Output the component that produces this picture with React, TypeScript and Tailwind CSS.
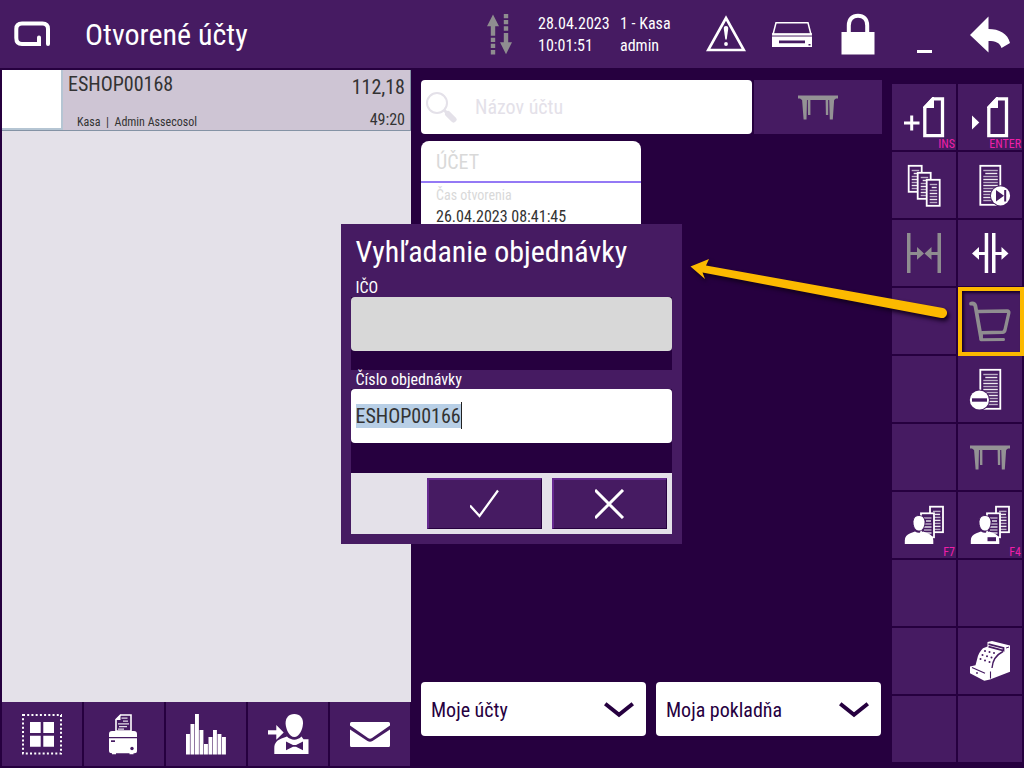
import { useEffect, useRef } from "react";
import type { ReactNode } from "react";

type IconProps = { children: ReactNode; className?: string };

function Icon({ children, className = "text-white" }: IconProps) {
  return (
    <svg
      viewBox="0 0 40 40"
      fill="currentColor"
      aria-hidden="true"
      className={`size-10 shrink-0 overflow-visible ${className}`}
    >
      {children}
    </svg>
  );
}

function Sheet({ x, y, w = 13, h = 26 }: { x: number; y: number; w?: number; h?: number }) {
  const lines = [];
  for (let i = 4; i < h - 2; i += 3) lines.push(i);
  return (
    <g>
      <rect x={x} y={y} width={w} height={h} fill="#461b62" stroke="currentColor" strokeWidth="1.8" />
      {lines.map((l, i) => (
        <rect
          key={l}
          x={x + (i === 1 ? 5 : 3)}
          y={y + l}
          width={i === 1 ? w - 8 : w - 5.5}
          height="1.4"
          opacity={i % 2 ? 0.9 : 0.65}
        />
      ))}
    </g>
  );
}

function BlankPage({ x }: { x: number }) {
  return (
    <g>
      <path
        d={`M${x + 10} 1.8H${x + 19.5}V38.7H${x + 1.8}V11Z`}
        fill="none"
        stroke="currentColor"
        strokeWidth="3.3"
      />
      <path d={`M${x} 10L${x + 9.5} 0H${x + 11}V11H${x}Z`} />
    </g>
  );
}

function AddPage() {
  return (
    <Icon>
      <path d="M6.2 18.5h3v6h6.3v3H9.2v6h-3v-6H0v-3h6.2z" />
      <BlankPage x={19} />
    </Icon>
  );
}

function OpenPage() {
  return (
    <Icon>
      <path d="M2 18.5L9.3 25.5L2 32.5Z" />
      <BlankPage x={17} />
    </Icon>
  );
}

function Copies() {
  return (
    <Icon>
      <Sheet x={4.7} y={0.8} />
      <Sheet x={13.7} y={7.8} />
      <Sheet x={22.7} y={14.8} />
    </Icon>
  );
}

function PageNext() {
  return (
    <Icon>
      <Sheet x={10.3} y={0.8} w={20} h={39} />
      <circle cx="30.5" cy="30.8" r="10.5" fill="#461b62" />
      <circle cx="30.5" cy="30.8" r="9.6" />
      <path d="M26 25v11.6l8-5.8zM34.2 25h2v11.6h-2z" fill="#461b62" />
    </Icon>
  );
}

function PageRemove() {
  return (
    <Icon>
      <Sheet x={10.3} y={0.8} w={20} h={39} />
      <circle cx="9.4" cy="31" r="10.5" fill="#461b62" />
      <circle cx="9.4" cy="31" r="9.6" />
      <path d="M2 29.3h15v3.4h-15z" fill="#461b62" />
    </Icon>
  );
}

function Merge() {
  return (
    <Icon className="text-[#8f8d90]">
      <path d="M3 0h3.5v40H3zM33.5 0H37v40h-3.5z" />
      <path d="M6 19h7v-5l7 6.5-7 6.3V22H6zM34 19h-6.5v-5l-7 6.5 7 6.3V22H34z" />
    </Icon>
  );
}

function Split() {
  return (
    <Icon>
      <path d="M14.7 0h3.5v40h-3.5zM22 0h3.5v40H22z" />
      <path d="M15 19H9v-5l-7 6.5 7 6.3V22h6zM25 19h6.5v-5l7 6.5-7 6.3V22H25z" />
    </Icon>
  );
}

function Cart() {
  return (
    <Icon className="text-[#8f8d90]">
      <g fill="none" stroke="currentColor" strokeLinecap="round" strokeLinejoin="round">
        <path d="M1 2.6Q4.6 2 5.4 5L11.2 38" strokeWidth="3.8" />
        <path d="M7.5 10.5L37.2 10Q39.2 10 38.8 12L35 29Q34.5 31 32.5 31.2L12 31.7" strokeWidth="3.4" />
        <path d="M11.5 34L11 38.7L33.5 38.4" strokeWidth="3" />
      </g>
    </Icon>
  );
}

function Table() {
  return (
    <Icon className="text-[#949295]">
      <path d="M0 8.5h40v3h-2l-2 1.5H4L2 11.5H0z" />
      <path d="M4 12h5l-.5 20.500H5.600zM31.200 12h5l-1.400 20.500h-3zM9.800 12h2.600v16H10zM27.600 12h2.600v16h-2.300z" />
    </Icon>
  );
}

function Person({ card = false }: { card?: boolean }) {
  return (
    <Icon>
      <Sheet x={26} y={1.7} w={13} h={25.5} />
      <Sheet x={17} y={8.3} w={13} h={24} />
      <path
        d="M15 10.5c4 0 6.3 3.2 6 7.6-.3 4.2-2.5 8-6 8s-5.7-3.8-6-8c-.3-4.4 2-7.6 6-7.6z"
        stroke="#461b62"
        strokeWidth="1"
      />
      <path d="M.8 39v-3.5c0-3.5 2-6 5.5-7.2l4.700-1.800c2.500 1.600 5.500 1.600 8 0l4.700 1.800c3.600 1.200 5.600 3.700 5.600 7.200V39z" />
      {card && <rect x="17.5" y="32.2" width="8.5" height="4" fill="#461b62" />}
    </Icon>
  );
}

function CashRegister() {
  const keys = [
    [15, 10], [19.5, 11], [24, 12],
    [12.5, 14], [17, 15.3], [21.5, 16.5],
    [10.5, 18], [15, 19.5], [19.5, 21],
  ];
  return (
    <Icon>
      <path d="M17.5 1L22 0L40 4.5V30.7L20 38.5L14.3 39.7L0 32.3V25.5L5.5 24.3L7.3 17.5Q8.6 11.5 13 7.3L17.5 5.5Z" />
      <g fill="none" stroke="#461b62">
        <path d="M18.5 3.2L33.5 7V9.6L18.5 5.6" strokeWidth="1.8" />
        <path d="M33 10.5C26 14 22.5 19 22 27" strokeWidth="1.4" />
        <path d="M2 26.5L15 32.3M20.5 30.5V37.5" strokeWidth="1.1" />
        <path d="M36 7L39 6" strokeWidth="1" />
      </g>
      <g fill="#461b62">
        {keys.map(([x, y]) => (
          <circle key={`${x}-${y}`} cx={x} cy={y} r="1" />
        ))}
        <circle cx="7" cy="32" r="0.9" />
      </g>
    </Icon>
  );
}

function SelectGrid() {
  return (
    <Icon>
      <rect x="1" y="1" width="38" height="38.5" fill="none" stroke="currentColor" strokeWidth="2" strokeDasharray="2 2.22" />
      <path d="M8 8h10.700v11H8zM21.300 8H32v11H21.300zM8 21.700h10.700v11H8zM21.300 21.700H32v11H21.300z" />
    </Icon>
  );
}

function Printer() {
  return (
    <Icon>
      <path d="M16.5 1H27V17H12V5.5Z" fill="none" stroke="currentColor" strokeWidth="1.6" />
      <path d="M11.5 6L16.5 .5V6Z" />
      <path d="M17.5 3.5h6v1.200h-6zM19 6.500h5v1.200h-5zM14 9.300h11v1.200H14zM15 12h8v1.200h-8zM14 14.500h6v1.200h-6z" opacity=".85" />
      <path d="M8 17h22q3 0 3 3v3H5v-3q0-3 3-3zM5 24.200h28v12.500q0 2.500-2.500 2.500H29.500v1h-4v-1H12v1H8v-1q-3 0-3-2.500z" />
      <path d="M7 26.300h4v1.700H7z" fill="#461b62" />
      <circle cx="28" cy="34.5" r="1.7" fill="#461b62" />
    </Icon>
  );
}

function Histogram() {
  const tops = [20, 10, 0, 16, 30, 23, 16, 20, 23];
  return (
    <Icon>
      {tops.map((top, i) => (
        <rect key={i} x={i * 4.5} y={top} width="3.9" height={40.5 - top} />
      ))}
    </Icon>
  );
}

function Waiter() {
  return (
    <Icon>
      <path d="M0 16.300h8.300v-5.300l7.400 7.400-7.400 7.400v-5.300H0z" />
      <path d="M26.300 0c5.700 0 9 4 8.700 9.800-.4 6-3.700 13.200-8.700 13.200s-8.300-7.200-8.700-13.200C17.300 4 20.600 0 26.300 0z" />
      <path d="M6.300 40V34c0-5 3-8 7.200-9.500l5.500-2c4 4.200 10.500 4.200 14.500 0l2 2.700h5V40z" />
      <path d="M18 27.500l7 3.500h3l7-3.500v8.700l-7-3.500h-3l-7 3.500z" fill="#461b62" />
    </Icon>
  );
}

function Mail() {
  return (
    <Icon>
      <path d="M1.500 8h37Q40 8 40 9.500V11.500L22 24Q20 25.500 18 24L0 11.500V9.500Q0 8 1.500 8Z" />
      <path d="M0 15.500L17.500 27Q20 28.500 22.500 27L40 15.500V31.500Q40 33 38.500 33H1.500Q0 33 0 31.500Z" />
    </Icon>
  );
}

function SyncArrows() {
  return (
    <svg viewBox="0 0 25 41" fill="#8f8d90" className="h-[41px] w-[25px]" aria-hidden="true">
      <path d="M6 .5l6 11.800H8.200v9.400H3.800v-9.400H0zM3.800 23.700h4.400v4.300H3.800zM3.800 29.800h4.400v4.300H3.800zM3.800 36h4.400v4.500H3.800z" />
      <path d="M16.800 0h4.400v4.300h-4.400zM16.800 6h4.400v4.300h-4.400zM16.800 12.200h4.400v4.500h-4.400zM16.800 19h4.400v9.300H25l-6 12-6-12h3.800z" />
    </svg>
  );
}

function Warning() {
  return (
    <Icon>
      <path d="M20 4L37.800 36H2.200Z" fill="none" stroke="currentColor" strokeWidth="2.600" />
      <path d="M20 12c1.700 0 2.400 1.200 2.200 3l-1.500 10.500h-1.400L17.800 15c-.2-1.800.5-3 2.200-3z" />
      <circle cx="20" cy="30" r="1.9" />
    </Icon>
  );
}

function Drawer() {
  return (
    <Icon>
      <path d="M4 8.700h32l3 11.800H1z" fill="none" stroke="currentColor" strokeWidth="1.500" />
      <path d="M0 19h40v2.500H0z" opacity=".8" />
      <path d="M0 22.500h40V33H0z" />
      <path d="M7 26.500h26v2.700H7zM36.500 30h2v1.600h-2z" fill="#461b62" />
    </Icon>
  );
}

function Lock() {
  return (
    <Icon>
      <path d="M10.800 19V11.500C10.800 5 14.500 1.800 20 1.800S29.200 5 29.200 11.500V19" fill="none" stroke="currentColor" strokeWidth="4" />
      <path d="M3.500 18h33v22.400h-33z" />
    </Icon>
  );
}

function Back() {
  return (
    <Icon>
      <path d="M0 21L18.500 2.500V15C29 15 38 19.500 40 29L31.500 34C29.500 28.500 25.500 27 18.500 27V38.500Z" />
    </Icon>
  );
}

const headerButtons = [
  { label: "Upozornenia", icon: <Warning /> },
  { label: "Zásuvka", icon: <Drawer /> },
  { label: "Zamknúť", icon: <Lock /> },
  { label: "Minimalizovať", icon: <Icon><path d="M13 36h15v3h-15z" /></Icon> },
  { label: "Späť", icon: <Back /> },
];

const footerButtons = [
  { label: "Výber", icon: <SelectGrid /> },
  { label: "Tlač", icon: <Printer /> },
  { label: "Štatistika", icon: <Histogram /> },
  { label: "Obsluha", icon: <Waiter /> },
  { label: "Správa", icon: <Mail /> },
];

type Tile = { label: string; icon: ReactNode; hint?: string; active?: boolean } | null;

const tiles: Tile[] = [
  { label: "Nový účet", icon: <AddPage />, hint: "INS" },
  { label: "Otvoriť účet", icon: <OpenPage />, hint: "ENTER" },
  { label: "Kópie", icon: <Copies /> },
  { label: "Ďalší účet", icon: <PageNext /> },
  { label: "Spojiť", icon: <Merge /> },
  { label: "Rozdeliť", icon: <Split /> },
  null,
  { label: "Objednávka", icon: <Cart />, active: true },
  null,
  { label: "Odstrániť účet", icon: <PageRemove /> },
  null,
  { label: "Stôl", icon: <Table /> },
  { label: "Účty zákazníka", icon: <Person />, hint: "F7" },
  { label: "Karta zákazníka", icon: <Person card />, hint: "F4" },
  null,
  null,
  null,
  { label: "Pokladňa", icon: <CashRegister /> },
  null,
  null,
];

function Header() {
  return (
    <header className="flex h-[68px] items-center bg-[#461b62] pr-px pl-[14px] text-white">
      <svg viewBox="0 0 36 26" className="h-[26px] w-9" fill="none" stroke="currentColor" strokeWidth="4" strokeLinecap="round" aria-hidden="true">
        <path d="M34 23V8Q34 2.500 28.500 2.500H8Q2.300 2.500 2.300 8V17Q2.300 23 8 23H25V16.500" />
      </svg>
      <h1 className="ml-[35px] pt-0.5 text-[30px] leading-10">Otvorené účty</h1>
      <div className="ml-auto flex items-center">
        <SyncArrows />
        <div className="ml-[26px] w-[82px] pt-0.5 text-base leading-[22px]">
          <p>28.04.2023</p>
          <p>10:01:51</p>
        </div>
        <div className="w-[73px] pt-0.5 text-base leading-[22px]">
          <p>1 - Kasa</p>
          <p>admin</p>
        </div>
        {headerButtons.map((b) => (
          <button key={b.label} aria-label={b.label} className="flex h-[68px] w-[66px] items-center justify-center">
            {b.icon}
          </button>
        ))}
      </div>
    </header>
  );
}

function Accounts() {
  return (
    <section className="flex w-[409px] shrink-0 flex-col">
      <div className="flex-1 bg-[#e4e1e9]">
        <button className="flex h-[61px] w-full border-b border-[#8493a5] bg-[#cec5d4] text-left text-[#333]">
          <span className="h-[60px] w-[61px] shrink-0 border-r-2 border-b-2 border-[#b5c5d3] bg-white" />
          <span className="flex h-[60px] flex-1 justify-between border-r border-[#8493a5] px-[5px]">
            <span className="flex flex-col justify-between">
              <span className="text-xl leading-7">ESHOP00168</span>
              <span className="pl-[9px] text-xs leading-4 whitespace-pre">Kasa  |  Admin Assecosol</span>
            </span>
            <span className="flex flex-col justify-between pt-[3px] text-right">
              <span className="text-xl leading-7">112,18</span>
              <span className="text-base leading-5">49:20</span>
            </span>
          </span>
        </button>
      </div>
      <div className="flex gap-0.5">
        {footerButtons.map((b) => (
          <button key={b.label} aria-label={b.label} className="flex h-16 w-20 items-center justify-center bg-[#461b62]">
            {b.icon}
          </button>
        ))}
      </div>
    </section>
  );
}

function Dropdown({ label, value }: { label: string; value: string }) {
  return (
    <div className="relative flex-1">
      <select aria-label={label} className="h-[54px] w-full appearance-none rounded bg-white pt-0.5 pr-12 pl-2.5 text-xl text-[#26003f]">
        <option>{value}</option>
      </select>
      <svg viewBox="0 0 30 16" className="pointer-events-none absolute top-5 right-3 h-4 w-[30px]" fill="none" stroke="#26003f" strokeWidth="4" aria-hidden="true">
        <path d="M1.200 1.700L15 12.800L28.800 1.700" />
      </svg>
    </div>
  );
}

function Workspace() {
  return (
    <main className="flex min-w-0 flex-1 flex-col px-2.5 pt-2.5 pb-[30px]">
      <div className="flex gap-0.5">
        <label className="flex h-[54px] min-w-0 flex-1 items-center rounded bg-white pl-[5px]">
          <svg viewBox="0 0 31 31" className="size-[31px] shrink-0" fill="none" stroke="#e4e1e9" aria-hidden="true">
            <circle cx="11" cy="11" r="10" strokeWidth="2" />
            <path d="M18 18L22 22" strokeWidth="3" />
            <path d="M22 22L27.500 27.500" strokeWidth="6" strokeLinecap="round" />
          </svg>
          <input type="text" aria-label="Názov účtu" placeholder="Názov účtu" className="ml-[18px] min-w-0 flex-1 text-xl outline-none placeholder:text-[#e4e1e9]" />
        </label>
        <button aria-label="Stoly" className="flex w-32 items-center justify-center bg-[#461b62]">
          <Table />
        </button>
      </div>
      <article className="mt-[7px] h-[150px] w-[220px] rounded-t-lg bg-white text-[#333]">
        <h2 className="border-b-2 border-[#9479f5] px-[15px] pt-0.5 text-xl leading-[38px] text-[#d9d9d9]">ÚČET</h2>
        <p className="px-[15px] pt-0.5 text-sm leading-5 text-[#d9d9d9]">Čas otvorenia</p>
        <p className="px-[15px] text-base leading-6">26.04.2023 08:41:45</p>
      </article>
      <div className="mt-auto flex gap-2.5 pr-px">
        <Dropdown label="Účty" value="Moje účty" />
        <Dropdown label="Pokladňa" value="Moja pokladňa" />
      </div>
    </main>
  );
}

// Highlight frame round the active tile with the arrow that leads to the dialog
function Callout() {
  return (
    <>
      <span className="pointer-events-none absolute -top-px -right-0.5 -bottom-0.5 left-0 z-20 border-4 border-[#fcb900] shadow-[inset_2px_2px_3px_#1a0029]" />
      <svg viewBox="0 0 270 76" className="pointer-events-none absolute -top-9 right-full z-20 h-[76px] w-[270px] drop-shadow-[2px_3px_2px_#12001e]" fill="#fcb900" aria-hidden="true">
        <path d="M2.500 14.500L21 7L18 13.500L255 56A5 5 0 0 1 253 66L14.500 20.500L17 27Z" />
      </svg>
    </>
  );
}

function Toolbar() {
  return (
    <nav className="mt-3.5 mr-0.5 grid auto-rows-[66px] grid-cols-[64px_64px] gap-0.5 self-start">
      {tiles.map((tile, i) => (
        <div key={i} className="relative">
          <button aria-label={tile?.label ?? "Prázdne"} className="flex size-full items-center justify-center bg-[#461b62]">
            {tile?.icon}
            {tile?.hint && (
              <span className="absolute right-px bottom-0 text-xs leading-3 text-[#f01fa8]">{tile.hint}</span>
            )}
          </button>
          {tile?.active && <Callout />}
        </div>
      ))}
    </nav>
  );
}

function OrderDialog() {
  const orderRef = useRef<HTMLInputElement>(null);

  useEffect(() => {
    orderRef.current?.focus();
    orderRef.current?.select();
  }, []);

  return (
    <div className="pointer-events-none fixed inset-0 z-10 flex items-center justify-center pr-0.5">
      <form role="dialog" aria-labelledby="order-title" className="pointer-events-auto w-[341px] bg-[#461b62] px-2.5 pb-2.5 text-white">
        <h2 id="order-title" className="h-[54px] pl-[5px] text-[30px] leading-[56px]">Vyhľadanie objednávky</h2>
        <label htmlFor="ico" className="block pl-[5px] text-base leading-[19px]">IČO</label>
        <div className="bg-[#26003f] pb-[19px]">
          <input id="ico" type="text" disabled className="block h-[54px] w-full rounded bg-[#d8d8d8] px-[5px] text-xl" />
        </div>
        <label htmlFor="order" className="block pl-[5px] text-base leading-[19px]">Číslo objednávky</label>
        <div className="relative bg-[#26003f] pb-[30px]">
          <input
            ref={orderRef}
            id="order"
            type="text"
            defaultValue="ESHOP00166"
            className="block h-[54px] w-full rounded bg-white px-[5px] text-xl leading-[27px] text-[#333] outline-none selection:bg-[#b8cfe6] selection:text-[#333]"
          />
          <span className="absolute top-[13px] left-[110px] h-[27px] w-px bg-[#222]" />
        </div>
        <div className="flex justify-end gap-2.5 bg-[#e4e1e9] p-[5px]">
          <button type="button" aria-label="Potvrdiť" className="flex h-[51px] w-[115px] items-center justify-center border-t-2 border-r border-b border-l-2 border-t-[#662a90] border-r-[#26003f] border-b-[#26003f] border-l-[#662a90] bg-[#461b62]">
            <svg viewBox="0 0 30 30" className="size-[30px]" fill="none" stroke="currentColor" strokeWidth="2.200" aria-hidden="true">
              <path d="M0 16.500L9.500 27L28 1.500" />
            </svg>
          </button>
          <button type="button" aria-label="Zrušiť" className="flex h-[51px] w-[115px] items-center justify-center border-t-2 border-r border-b border-l-2 border-t-[#662a90] border-r-[#26003f] border-b-[#26003f] border-l-[#662a90] bg-[#461b62]">
            <svg viewBox="0 0 30 30" className="size-[30px]" fill="none" stroke="currentColor" strokeWidth="3" aria-hidden="true">
              <path d="M0 1L28 29M28 1L0 29" />
            </svg>
          </button>
        </div>
      </form>
    </div>
  );
}

function App() {
  return (
    <div className="flex min-h-screen flex-col bg-[#26003f] font-['Roboto_Condensed','Liberation_Sans_Narrow',Roboto,sans-serif]">
      <Header />
      <div className="flex flex-1 pt-0.5 pb-0.5 pl-0.5">
        <Accounts />
        <Workspace />
        <Toolbar />
      </div>
      <OrderDialog />
    </div>
  );
}

export default App;
